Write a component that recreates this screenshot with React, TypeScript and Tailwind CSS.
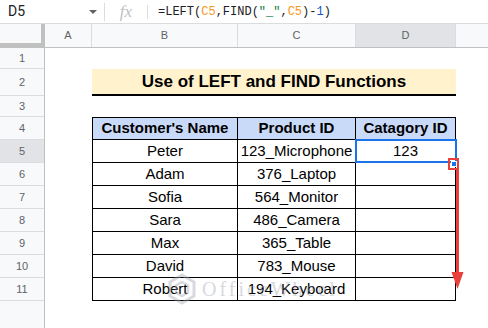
import React from 'react';

const data = [
  ['Peter', '123_Microphone', '123'],
  ['Adam', '376_Laptop', ''],
  ['Sofia', '564_Monitor', ''],
  ['Sara', '486_Camera', ''],
  ['Max', '365_Table', ''],
  ['David', '783_Mouse', ''],
  ['Robert', '194_Keyboard', ''],
];

function RowHead({ n, h, active }: { n?: number; h: string; active?: boolean }) {
  return (
    <div
      className={`${h} w-[45px] shrink-0 flex items-center justify-center border-r border-b border-r-[#c0c0c0] border-b-[#dadce0] text-[11px] text-[#5f6368] ${
        active ? 'bg-[#e1e3e6]' : 'bg-[#f8f9fa]'
      }`}
    >
      {n}
    </div>
  );
}

function FormulaBar() {
  return (
    <div className="h-[24px] flex items-center border-b border-[#dadce0] bg-white" style={{ fontFamily: 'Roboto, Arial, sans-serif' }}>
      <div className="w-[104px] h-full flex items-center pl-[8px] pr-[7px] justify-between">
        <span className="text-[14px] text-[#202124]">D5</span>
        <span className="w-0 h-0 border-l-[4px] border-r-[4px] border-t-[4px] border-l-transparent border-r-transparent border-t-[#5f6368]" />
      </div>
      <div className="w-px h-[18px] bg-[#dadce0]" />
      <div className="w-[42px] h-full flex items-center justify-center">
        <span className="text-[17px] italic text-[#c0c0c0]" style={{ fontFamily: '"Liberation Serif", serif' }}>
          fx
        </span>
      </div>
      <div className="w-px h-[14px] bg-[#dadce0]" />
      <div className="pl-[10px] text-[12px] text-[#202124]" style={{ fontFamily: '"Liberation Mono", monospace' }}>
        =LEFT(<span className="text-[#f7981d]">C5</span>,FIND(<span className="text-[#0b8043]">"_"</span>,
        <span className="text-[#f7981d]">C5</span>)-<span className="text-[#1155cc]">1</span>)
      </div>
    </div>
  );
}

function ColHeaders() {
  const cols = [
    { l: 'A', w: 'w-[47px]' },
    { l: 'B', w: 'w-[146px]' },
    { l: 'C', w: 'w-[118px]' },
    { l: 'D', w: 'w-[100px]', active: true },
  ];
  return (
    <div className="h-[24px] flex border-b border-[#c0c0c0] bg-[#f8f9fa] text-[11px] text-[#5f6368]">
      <div className="w-[45px] shrink-0 border-r-4 border-b-4 border-[#c0c0c0] bg-[#f8f9fa]" />
      {cols.map((c) => (
        <div
          key={c.l}
          className={`${c.w} shrink-0 flex items-center justify-center border-r border-[#dadce0] ${c.active ? 'bg-[#e1e3e6]' : ''}`}
        >
          {c.l}
        </div>
      ))}
      <div className="flex-1" />
    </div>
  );
}

export default function App() {
  const cell = 'shrink-0 flex items-center justify-center border-r border-b border-black text-[15px] text-black';
  return (
    <div className="w-[488px] h-[328px] overflow-hidden bg-white relative" style={{ fontFamily: '"Liberation Sans", Arial, sans-serif' }}>
      <FormulaBar />
      <ColHeaders />

      <div className="flex">
        <RowHead n={1} h="h-[21px]" />
      </div>
      <div className="flex">
        <RowHead n={2} h="h-[27px]" />
        <div className="w-[47px]" />
        <div className="w-[364px] h-[27px] bg-[#fff2cc] border-b-2 border-black flex items-center justify-center font-bold text-[17px] text-black">
          Use of LEFT and FIND Functions
        </div>
      </div>
      <div className="flex">
        <RowHead n={3} h="h-[21px]" />
      </div>
      <div className="flex">
        <RowHead n={4} h="h-[23px]" />
        <div className="w-[47px]" />
        <div className={`${cell} w-[146px] h-[23px] border-t border-l bg-[#c9daf8] font-bold`}>Customer's Name</div>
        <div className={`${cell} w-[118px] h-[23px] border-t bg-[#c9daf8] font-bold`}>Product ID</div>
        <div className={`${cell} w-[100px] h-[23px] border-t bg-[#c9daf8] font-bold`}>Catagory ID</div>
      </div>
      {data.map((r, i) => (
        <div className="flex" key={r[0]}>
          <RowHead n={i + 5} h="h-[23px]" active={i === 0} />
          <div className="w-[47px]" />
          <div className={`${cell} w-[146px] h-[23px] border-l`}>{r[0]}</div>
          <div className={`${cell} w-[118px] h-[23px]`}>{r[1]}</div>
          <div className={`${cell} w-[100px] h-[23px]`}>{r[2]}</div>
        </div>
      ))}
      <div className="flex">
        <div className="h-[27px] w-[45px] bg-[#f8f9fa] border-r border-[#c0c0c0]" />
      </div>

      {/* selected cell D5 */}
      <div className="absolute left-[355px] top-[139px] w-[102px] h-[24px] border-2 border-[#1a73e8]" />

      {/* fill handle + red drag arrow */}
      <div className="absolute left-[448px] top-[158px] w-[11px] h-[12px] border-2 border-[#e8413c] flex items-center justify-center">
        <div className="w-[6px] h-[6px] bg-[#1a73e8] border border-white" />
      </div>
      <svg className="absolute left-0 top-0" width="488" height="328">
        <rect x="456" y="170" width="3" height="105" fill="#e8413c" />
        <polygon points="451.5,272 463.5,272 457.5,289" fill="#e8413c" />
      </svg>

      {/* watermark */}
      <div className="absolute left-[168px] top-[273px] h-[32px] flex items-center gap-[6px] opacity-40 pointer-events-none">
        <svg width="28" height="32" viewBox="0 0 28 32">
          <polygon points="14,2 26,9 26,23 14,30 2,23 2,9" fill="none" stroke="#9ca3af" strokeWidth="3" />
          <polygon points="14,9 20,12.5 20,19.5 14,23 8,19.5 8,12.5" fill="none" stroke="#9ca3af" strokeWidth="2.5" />
        </svg>
        <span className="text-[20px] tracking-[3px] text-[#9ca3af]" style={{ fontFamily: '"Liberation Serif", serif' }}>
          OfficeWheel
        </span>
      </div>
    </div>
  );
}
